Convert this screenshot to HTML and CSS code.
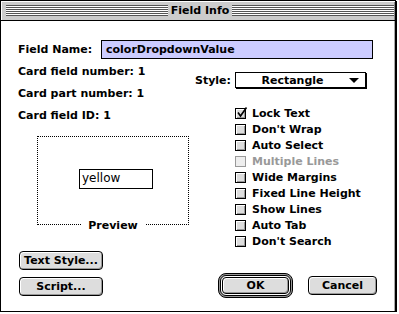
FILE: index.html
```html
<!DOCTYPE html>
<html lang="en">
<head>
    <meta charset="UTF-8">
    <title>Field Info</title>
    <link rel="stylesheet" href="styles.css">
</head>
<body>
    <div class="window">
        <div class="titlebar">
            <span class="stripes"></span>
            <span class="title">Field Info</span>
            <span class="stripes"></span>
        </div>
        <div class="content">
            <div class="name-row">
                <span class="name-label">Field Name:</span>
                <div class="name-input">colorDropdownValue</div>
            </div>
            <div class="columns">
                <div class="left">
                    <div class="info">
                        <div>Card field number: 1</div>
                        <div>Card part number: 1</div>
                        <div>Card field ID: 1</div>
                    </div>
                    <div class="preview">
                        <div class="preview-field">yellow</div>
                        <span class="preview-label">Preview</span>
                    </div>
                    <button class="btn btn-wide">Text Style...</button>
                    <button class="btn btn-wide btn-script">Script...</button>
                </div>
                <div class="right">
                    <div class="style-row">
                        <span class="style-label">Style:</span>
                        <div class="popup">
                            <span class="popup-text">Rectangle</span>
                            <span class="arrow"></span>
                        </div>
                    </div>
                    <ul class="checks">
                        <li><span class="box"><svg width="12" height="12" viewBox="0 0 12 12"><polyline points="2,5.5 4.5,9 10.5,0.5" fill="none" stroke="#000" stroke-width="1.6"/></svg></span>Lock Text</li>
                        <li><span class="box"></span>Don't Wrap</li>
                        <li><span class="box"></span>Auto Select</li>
                        <li class="disabled"><span class="box"></span>Multiple Lines</li>
                        <li><span class="box"></span>Wide Margins</li>
                        <li><span class="box"></span>Fixed Line Height</li>
                        <li><span class="box"></span>Show Lines</li>
                        <li><span class="box"></span>Auto Tab</li>
                        <li><span class="box"></span>Don't Search</li>
                    </ul>
                    <div class="actions">
                        <span class="ring"><span class="ring-inner"><button class="btn btn-ok">OK</button></span></span>
                        <button class="btn btn-cancel">Cancel</button>
                    </div>
                </div>
            </div>
        </div>
    </div>
</body>
</html>
```

FILE: styles.css
```css
body {
    margin: 0;
    background: #fff;
    font-family: "DejaVu Sans", sans-serif;
    font-size: 11px;
    font-weight: bold;
    color: #000;
}
.window {
    width: 396px;
    height: 312px;
    box-sizing: border-box;
    border: 1px solid #000;
    box-shadow: 1px 1px 0 #000, inset -1px 0 0 #aaa;
    background: #fff;
    display: flex;
    flex-direction: column;
}
.titlebar {
    height: 20px;
    box-sizing: border-box;
    border-bottom: 1px solid #000;
    background: #ccc;
    box-shadow: inset 1px 1px 0 #fff, inset -1px 0 0 #888;
    display: flex;
    align-items: center;
    padding: 0 1px 0 5px;
}
.stripes {
    flex: 1;
    height: 11px;
    background: repeating-linear-gradient(to bottom, #555 0 1px, #fff 1px 2px);
}
.title {
    padding: 0 3px;
    line-height: 19px;
}
.content {
    flex: 1;
    padding: 19px 0 0 17px;
}
.name-row {
    display: flex;
    align-items: center;
    height: 19px;
}
.name-label {
    width: 83px;
}
.name-input {
    width: 272px;
    height: 19px;
    box-sizing: border-box;
    border: 1px solid #000;
    background: #ccccff;
    padding-left: 4px;
    line-height: 17px;
}
.columns {
    display: flex;
}
.left {
    width: 177px;
    display: flex;
    flex-direction: column;
    align-items: flex-start;
}
.info {
    margin-top: 2px;
    line-height: 22px;
}
.preview {
    position: relative;
    margin: 9px 0 0 19px;
    width: 152px;
    height: 89px;
    box-sizing: border-box;
    border: 1px dotted #000;
}
.preview-field {
    margin: 32px 0 0 41px;
    width: 74px;
    height: 20px;
    box-sizing: border-box;
    border: 1px solid #000;
    padding-left: 2px;
    font-size: 12px;
    font-weight: normal;
    line-height: 17px;
}
.preview-label {
    position: absolute;
    left: 50%;
    bottom: -8px;
    transform: translateX(-50%);
    background: #fff;
    padding: 0 7px;
    line-height: 13px;
}
.btn {
    height: 19px;
    box-sizing: border-box;
    border: 1px solid #000;
    border-radius: 4px;
    background: #ddd;
    box-shadow: inset 1px 1px 0 #fff, inset -1px -1px 0 #999;
    font-family: "DejaVu Sans", sans-serif;
    font-size: 11px;
    font-weight: bold;
    color: #000;
    padding: 0;
}
.btn-wide {
    width: 84px;
    margin: 26px 0 0 1px;
}
.btn-script {
    margin-top: 7px;
}
.right {
    flex: 1;
}
.style-row {
    display: flex;
    align-items: center;
    margin-top: 13px;
}
.style-label {
    width: 40px;
}
.popup {
    width: 131px;
    height: 16px;
    box-sizing: border-box;
    border: 1px solid #000;
    box-shadow: 1px 1px 0 #000;
    display: flex;
    align-items: center;
}
.popup-text {
    flex: 1;
    text-align: center;
}
.arrow {
    margin-right: 6px;
    border-left: 5px solid transparent;
    border-right: 5px solid transparent;
    border-top: 5px solid #000;
}
.checks {
    list-style: none;
    margin: 17px 0 0 40px;
    padding: 0;
}
.checks li {
    height: 16px;
    display: flex;
    align-items: center;
    gap: 6px;
}
.box {
    width: 11px;
    height: 11px;
    box-sizing: border-box;
    border: 1px solid #000;
    background: #ddd;
    box-shadow: inset 1px 1px 0 #fff, inset -1px -1px 0 #999;
    position: relative;
}
.box svg {
    position: absolute;
    left: 0;
    top: -2px;
}
.checks li.disabled {
    color: #999;
}
.disabled .box {
    border-color: #999;
    background: #eee;
    box-shadow: none;
}
.actions {
    display: flex;
    align-items: center;
    margin: 24px 0 0 23px;
}
.ring {
    border: 1px solid #000;
    border-radius: 8px;
    padding: 1px;
    background: #999;
    display: flex;
}
.ring-inner {
    border: 1px solid #000;
    border-radius: 6px;
    padding: 1px;
    background: #fff;
    display: flex;
}
.btn-ok {
    width: 67px;
    height: 17px;
}
.btn-cancel {
    width: 69px;
    margin-left: 15px;
}
```
